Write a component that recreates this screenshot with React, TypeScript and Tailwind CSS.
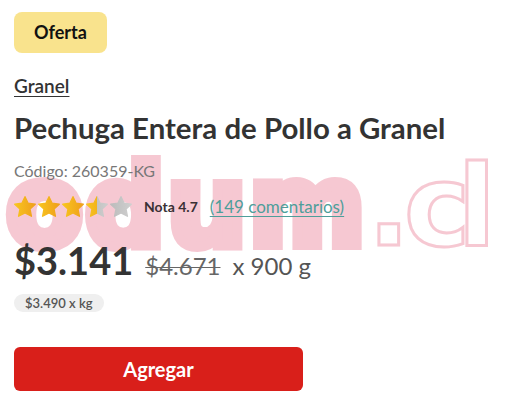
import React from "react";

const font = "font-['Lato','Noto_Sans',sans-serif]";

function Star({ fill }: { fill: "full" | "half" | "empty" }) {
  const id = `g-${fill}`;
  return (
    <svg viewBox="0 0 24 24" className="h-[22px] w-[22px]">
      <defs>
        <linearGradient id={id} x1="0" x2="1" y1="0" y2="0">
          {fill === "full" && (
            <>
              <stop offset="0%" stopColor="#f8c51f" />
              <stop offset="100%" stopColor="#ef9f1b" />
            </>
          )}
          {fill === "half" && (
            <>
              <stop offset="0%" stopColor="#f8c51f" />
              <stop offset="52%" stopColor="#f2b31c" />
              <stop offset="52%" stopColor="#c4c4c4" />
              <stop offset="100%" stopColor="#cdcdcd" />
            </>
          )}
          {fill === "empty" && (
            <>
              <stop offset="0%" stopColor="#bcbcbc" />
              <stop offset="100%" stopColor="#cfcfcf" />
            </>
          )}
        </linearGradient>
      </defs>
      <path
        d="M12 0.8l3.4 7.1 7.8 1-5.7 5.4 1.5 7.8L12 18.3l-7 3.8 1.5-7.8L0.8 8.9l7.8-1z"
        fill={`url(#${id})`}
        stroke={`url(#${id})`}
        strokeWidth="1.5"
        strokeLinejoin="round"
      />
    </svg>
  );
}

export default function App() {
  return (
    <div className={`relative h-[402px] w-[507px] overflow-hidden bg-white ${font} text-[#333]`}>
      {/* watermark */}
      <div className="pointer-events-none absolute left-[6px] top-[150px] select-none whitespace-nowrap font-['DejaVu_Sans',sans-serif] text-[112px] font-bold leading-none tracking-[2px] text-[#f6c8d2] [-webkit-text-stroke:10px_#f6c8d2]">
        odum
        <span className="text-transparent [-webkit-text-stroke:3px_#f6c8d2]">
          <span className="tracking-[-6px]">.</span>
          <span className="tracking-[-13px]">c</span>l
        </span>
      </div>

      <div className="relative flex flex-col items-start px-[14px] pt-[12px]">
        {/* badge */}
        <span className="rounded-[8px] bg-[#f9e38d] px-[20px] py-[9px] text-[18px] font-bold leading-[23px] text-[#111]">
          Oferta
        </span>

        <a className="mt-[21px] text-[19px] font-semibold leading-[24px] text-[#333] underline decoration-1 underline-offset-[3px]">
          Granel
        </a>

        <h1 className="mt-[13px] text-[29.4px] font-bold leading-[34px] text-[#333]">
          Pechuga Entera de Pollo a Granel
        </h1>

        <p className="mt-[16px] text-[16px] leading-[20px] text-[#777]">Código: 260359-KG</p>

        {/* rating */}
        <div className="mt-[15px] flex h-[22px] items-center">
          <div className="flex gap-[2px]">
            <Star fill="full" />
            <Star fill="full" />
            <Star fill="full" />
            <Star fill="half" />
            <Star fill="empty" />
          </div>
          <span className="ml-[12px] text-[14px] font-bold leading-[22px] text-[#3a3034]">Nota 4.7</span>
          <a className="ml-[12px] text-[17px] leading-[22px] text-[#4e9e9a] underline decoration-1 underline-offset-[3px]">
            (149 comentarios)
          </a>
        </div>

        {/* price */}
        <div className="mt-[19px] flex items-baseline leading-[46px]">
          <span className="text-[38px] font-bold text-[#333]">$3.141</span>
          <span className="ml-[12px] text-[24px] text-[#666] line-through decoration-1">$4.671</span>
          <span className="ml-[12px] text-[24px] text-[#555]">x 900 g</span>
        </div>

        <span className="mt-[5px] rounded-full bg-[#efefef] px-[11px] py-0 text-[13px] font-semibold leading-[18px] text-[#555]">
          $3.490 x kg
        </span>

        <button className="mt-[35px] h-[44px] w-[289px] rounded-[6px] bg-[#d91f1a] text-[20px] font-bold text-white">
          Agregar
        </button>
      </div>
    </div>
  );
}
